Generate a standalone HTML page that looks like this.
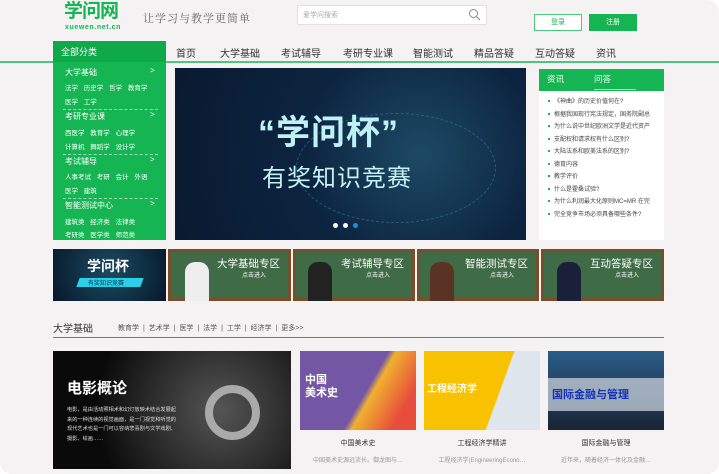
<!DOCTYPE html>
<html><head><meta charset="utf-8"><style>
*{margin:0;padding:0;box-sizing:border-box}
html,body{width:719px;height:474px;overflow:hidden;background:#fff;font-family:"Liberation Sans","Noto Sans CJK SC",sans-serif}
#pg{position:absolute;left:0;top:0;width:719px;height:474px;background:#f4f2f3;border-radius:0 12px 12px 12px;overflow:hidden}
.a{position:absolute}
.g{color:#14b552}
.nav span{position:absolute;top:45px;font-size:10px;color:#333}
.sb{font-size:7px;color:#fff}
.sb .h{position:absolute;left:12px;font-size:8px}
.sb .ar{position:absolute;left:97px;font-size:8px}
.sb .l{position:absolute;left:12px;font-size:6.5px;white-space:nowrap;word-spacing:4px}
.sb .d{position:absolute;left:10px;width:95px;border-top:1px dashed #9be0b4}
.news div{position:absolute;left:9px;font-size:6px;color:#444;white-space:nowrap}
.news div:before{content:"";display:inline-block;width:2px;height:2px;background:#14b552;margin-right:4px;vertical-align:middle}
.bb{position:absolute;top:249px;height:52px;background:#3f6b46;border:3px solid #7a4e2a}
.bb .t{position:absolute;right:8px;top:4px;color:#fff;font-size:10.5px}
.bb .s{position:absolute;right:22px;top:18px;color:#fff;font-size:6px}
.card .t{position:absolute;top:438px;width:116px;text-align:center;font-size:7px;color:#333}
.card .d{position:absolute;top:455px;width:116px;text-align:center;font-size:6px;color:#999;white-space:nowrap;overflow:hidden}
</style></head><body><div id="pg">
<div class="a g" style="left:64px;top:1px;font-size:19px;line-height:22px;font-weight:bold;letter-spacing:-1px">学问网</div>
<div class="a g" style="left:65px;top:24px;font-size:7px;line-height:8px;font-weight:bold;letter-spacing:0.6px">xuewen.net.cn</div>
<div class="a" style="left:143px;top:10px;font-size:11px;color:#666;font-family:'Noto Serif CJK SC',serif;letter-spacing:1px">让学习与教学更简单</div>
<div class="a" style="left:297px;top:5px;width:190px;height:20px;background:#fff;border:1px solid #e2e2e2"></div>
<div class="a" style="left:303px;top:10px;font-size:7px;color:#aaa">爱学问搜索</div>
<svg class="a" style="left:468px;top:8px" width="13" height="13" viewBox="0 0 13 13"><circle cx="5.5" cy="5.5" r="4" fill="none" stroke="#888" stroke-width="1"/><path d="M8.5 8.5L12 12" stroke="#888" stroke-width="1.2"/></svg>
<div class="a" style="left:534px;top:14px;width:48px;height:17px;border:1px solid #4cc77c;background:#fff;color:#14b552;font-size:7px;text-align:center;line-height:15px">登录</div>
<div class="a" style="left:589px;top:14px;width:48px;height:17px;background:#14b552;color:#fff;font-size:7px;text-align:center;line-height:17px">注册</div>
<div class="a" style="left:0;top:61px;width:719px;height:2px;background:#4cc77c"></div>
<div class="a" style="left:53px;top:41px;width:113px;height:21px;background:#10a94a;color:#fff;font-size:9px;padding:4px 8px">全部分类</div>
<div class="nav"><span style="left:176px">首页</span><span style="left:220px">大学基础</span><span style="left:281px">考试辅导</span><span style="left:343px">考研专业课</span><span style="left:413px">智能测试</span><span style="left:474px">精品答疑</span><span style="left:535px">互动答疑</span><span style="left:596px">资讯</span></div>
<div class="a sb" style="left:53px;top:62px;width:113px;height:178px;background:#14b552">
<div class="h" style="top:5px">大学基础</div><div class="ar" style="top:4px">&gt;</div>
<div class="l" style="top:20px">法学 历史学 哲学 教育学</div><div class="l" style="top:34px">医学 工学</div>
<div class="d" style="top:47px"></div>
<div class="h" style="top:49px">考研专业课</div><div class="ar" style="top:48px">&gt;</div>
<div class="l" style="top:65px">西医学 教育学 心理学</div><div class="l" style="top:79px">计算机 舞蹈学 设计学</div>
<div class="d" style="top:92px"></div>
<div class="h" style="top:94px">考试辅导</div><div class="ar" style="top:93px">&gt;</div>
<div class="l" style="top:109px">人事考试 考研 会计 外语</div><div class="l" style="top:123px">医学 建筑</div>
<div class="d" style="top:136px"></div>
<div class="h" style="top:138px">智能测试中心</div><div class="ar" style="top:137px">&gt;</div>
<div class="l" style="top:154px">建筑类 经济类 法律类</div><div class="l" style="top:167px">考研类 医学类 师范类</div>
</div>
<div class="a" style="left:175px;top:68px;width:351px;height:172px;background:radial-gradient(circle at 70% 50%,#1d4a66 0%,#0c2440 45%,#0a1a30 100%)"></div>
<div class="a" style="left:296px;top:113px;width:200px;height:110px;border-radius:50%;border:1px dashed #2f7d8f;opacity:.6"></div>
<div class="a" style="left:258px;top:105px;font-size:34px;font-weight:bold;color:#bff2f5;letter-spacing:1px">“学问杯”</div>
<div class="a" style="left:262px;top:158px;font-size:24px;color:#c7f2f5;letter-spacing:1px">有奖知识竞赛</div>
<div class="a" style="left:333px;top:223px;width:5px;height:5px;border-radius:50%;background:#fff"></div>
<div class="a" style="left:343px;top:223px;width:5px;height:5px;border-radius:50%;background:#fff"></div>
<div class="a" style="left:353px;top:223px;width:5px;height:5px;border-radius:50%;background:#1a8fe0"></div>
<div class="a" style="left:539px;top:69px;width:125px;height:171px;background:#fff"></div>
<div class="a" style="left:539px;top:69px;width:125px;height:22px;background:#14b552"></div>
<div class="a" style="left:547px;top:73px;color:#fff;font-size:8.5px">资讯</div>
<div class="a" style="left:594px;top:73px;color:#fff;font-size:8.5px">问答</div>
<div class="a" style="left:594px;top:89px;width:42px;height:1px;background:#a7e5be"></div>
<div class="a news" style="left:539px;top:0">
<div style="top:96px">《神曲》的历史价值何在?</div><div style="top:109px">根据我国现行宪法规定，国务院副总</div><div style="top:121px">为什么说中世纪欧洲文学是近代资产</div><div style="top:134px">支配权和请求权有什么区别?</div><div style="top:146px">大陆法系和欧美法系的区别?</div><div style="top:159px">德育内容</div><div style="top:171px">教学评价</div><div style="top:184px">什么是霍桑试验?</div><div style="top:196px">为什么利润最大化原则MC=MR 在完</div><div style="top:209px">完全竞争市场必须具备哪些条件?</div>
</div>
<div class="a" style="left:53px;top:249px;width:113px;height:52px;background:radial-gradient(circle at 50% 40%,#1b4b63,#07182a)"></div>
<div class="a" style="left:87px;top:256px;color:#fff;font-size:14px;font-weight:bold">学问杯</div>
<div class="a" style="left:78px;top:278px;width:64px;height:9px;background:#2ad0e8;transform:skewX(-20deg)"></div>
<div class="a" style="left:88px;top:278px;color:#0b3550;font-size:6px">有奖知识竞赛</div>
<div class="bb" style="left:168px;width:123px"><div class="t">大学基础专区</div><div class="s">点击进入</div></div>
<div class="bb" style="left:293px;width:122px"><div class="t">考试辅导专区</div><div class="s">点击进入</div></div>
<div class="bb" style="left:417px;width:122px"><div class="t">智能测试专区</div><div class="s">点击进入</div></div>
<div class="bb" style="left:541px;width:123px"><div class="t">互动答疑专区</div><div class="s">点击进入</div></div>
<div class="a" style="left:185px;top:262px;width:24px;height:39px;background:#eee;border-radius:10px 10px 0 0"></div>
<div class="a" style="left:308px;top:262px;width:24px;height:39px;background:#222;border-radius:10px 10px 0 0"></div>
<div class="a" style="left:430px;top:262px;width:24px;height:39px;background:#5a3324;border-radius:10px 10px 0 0"></div>
<div class="a" style="left:557px;top:262px;width:24px;height:39px;background:#1a1f3a;border-radius:10px 10px 0 0"></div>
<div class="a" style="left:53px;top:320px;font-size:10px;color:#333">大学基础</div>
<div class="a" style="left:118px;top:323px;font-size:7px;color:#555;word-spacing:2px">教育学 | 艺术学 | 医学 | 法学 | 工学 | 经济学 | 更多&gt;&gt;</div>
<div class="a" style="left:53px;top:337px;width:611px;height:1px;background:#777"></div>
<div class="a" style="left:53px;top:351px;width:238px;height:118px;background:radial-gradient(circle at 70% 50%,#555,#0a0a0a 70%)"></div>
<div class="a" style="left:67px;top:377px;color:#fff;font-size:15px;font-weight:bold">电影概论</div>
<div class="a" style="left:67px;top:406px;width:112px;color:#ddd;font-size:5.2px;line-height:9.5px">电影，是由活动照相术和幻灯放映术结合发展起来的一种连续的视觉画面，是一门视觉和听觉的现代艺术也是一门可以容纳悲喜剧与文学戏剧、摄影、绘画……</div>
<div class="a" style="left:205px;top:385px;width:55px;height:55px;border-radius:50%;border:8px solid #aaa"></div>
<div class="a" style="left:300px;top:351px;width:116px;height:79px;background:linear-gradient(120deg,#7357a5 55%,#f0b030 60%,#e74c3c 85%)"></div>
<div class="a" style="left:305px;top:374px;color:#fff;font-size:11px;font-weight:bold;line-height:13px">中国<br>美术史</div>
<div class="a" style="left:424px;top:351px;width:116px;height:79px;background:linear-gradient(110deg,#f8c200 62%,#dfe6ee 63%)"></div>
<div class="a" style="left:427px;top:380px;color:#fff;font-size:10px;font-weight:bold">工程经济学</div>
<div class="a" style="left:548px;top:351px;width:116px;height:79px;background:linear-gradient(#2a5c88,#1a2434)"></div>
<div class="a" style="left:548px;top:378px;width:116px;height:33px;background:rgba(200,210,220,.75)"></div>
<div class="a" style="left:552px;top:386px;color:#1531b8;font-size:11px;font-weight:bold">国际金融与管理</div>
<div class="card"><div class="t" style="left:300px">中国美术史</div><div class="d" style="left:300px">中国美术史源远流长。御龙图与…</div>
<div class="t" style="left:424px">工程经济学精讲</div><div class="d" style="left:424px">工程经济学(EngineeringEcono…</div>
<div class="t" style="left:548px">国际金融与管理</div><div class="d" style="left:548px">近年来，随着经济一体化及金融…</div></div>
</div></body></html>
